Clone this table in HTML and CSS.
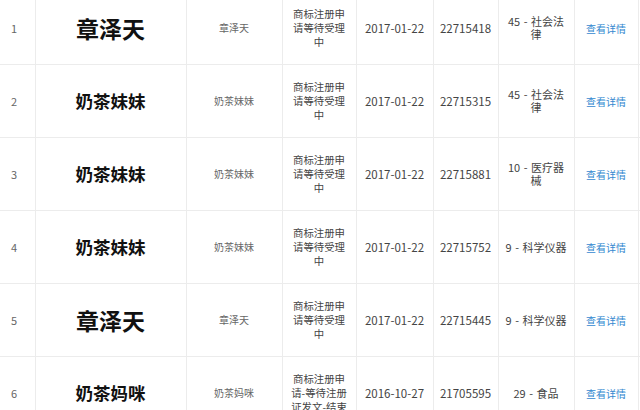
FILE: index.html
```html
<!DOCTYPE html>
<html lang="zh-CN">
<head>
<meta charset="utf-8">
<link rel="stylesheet" href="styles.css">
</head>
<body>
<table class="grid">
  <colgroup>
    <col class="c-no"><col class="c-mark"><col class="c-name"><col class="c-status"><col class="c-date"><col class="c-reg"><col class="c-cls"><col class="c-act"><col class="c-extra">
  </colgroup>
  <tbody>
    <tr>
      <td class="no">1</td>
      <td class="mark big">章泽天</td>
      <td class="name">章泽天</td>
      <td class="status">商标注册申<br>请等待受理<br>中</td>
      <td class="date">2017-01-22</td>
      <td class="reg">22715418</td>
      <td class="cls">45 - 社会法<br>律</td>
      <td class="act"><a class="link">查看详情</a></td>
      <td class="extra"></td>
    </tr>
    <tr>
      <td class="no">2</td>
      <td class="mark">奶茶妹妹</td>
      <td class="name">奶茶妹妹</td>
      <td class="status">商标注册申<br>请等待受理<br>中</td>
      <td class="date">2017-01-22</td>
      <td class="reg">22715315</td>
      <td class="cls">45 - 社会法<br>律</td>
      <td class="act"><a class="link">查看详情</a></td>
      <td class="extra"></td>
    </tr>
    <tr>
      <td class="no">3</td>
      <td class="mark">奶茶妹妹</td>
      <td class="name">奶茶妹妹</td>
      <td class="status">商标注册申<br>请等待受理<br>中</td>
      <td class="date">2017-01-22</td>
      <td class="reg">22715881</td>
      <td class="cls">10 - 医疗器<br>械</td>
      <td class="act"><a class="link">查看详情</a></td>
      <td class="extra"></td>
    </tr>
    <tr>
      <td class="no">4</td>
      <td class="mark">奶茶妹妹</td>
      <td class="name">奶茶妹妹</td>
      <td class="status">商标注册申<br>请等待受理<br>中</td>
      <td class="date">2017-01-22</td>
      <td class="reg">22715752</td>
      <td class="cls">9 - 科学仪器</td>
      <td class="act"><a class="link">查看详情</a></td>
      <td class="extra"></td>
    </tr>
    <tr>
      <td class="no">5</td>
      <td class="mark big">章泽天</td>
      <td class="name">章泽天</td>
      <td class="status">商标注册申<br>请等待受理<br>中</td>
      <td class="date">2017-01-22</td>
      <td class="reg">22715445</td>
      <td class="cls">9 - 科学仪器</td>
      <td class="act"><a class="link">查看详情</a></td>
      <td class="extra"></td>
    </tr>
    <tr>
      <td class="no">6</td>
      <td class="mark">奶茶妈咪</td>
      <td class="name">奶茶妈咪</td>
      <td class="status">商标注册申<br>请-等待注册<br>证发文-结束</td>
      <td class="date">2016-10-27</td>
      <td class="reg">21705595</td>
      <td class="cls">29 - 食品</td>
      <td class="act"><a class="link">查看详情</a></td>
      <td class="extra"></td>
    </tr>
  </tbody>
</table>
</body>
</html>
```

FILE: styles.css
```css
html, body {
  margin: 0;
  padding: 0;
  background: #ffffff;
  overflow: hidden;
}
body {
  width: 640px;
  height: 410px;
  font-family: "Noto Sans CJK SC", "Microsoft YaHei", sans-serif;
  color: #444;
}
.grid {
  border-collapse: collapse;
  table-layout: fixed;
  width: 659px;
  margin-top: -9px;
}
.c-no { width: 35px; }
.c-mark { width: 151px; }
.c-name { width: 96px; }
.c-status { width: 74px; }
.c-date { width: 77px; }
.c-reg { width: 65px; }
.c-cls { width: 76px; }
.c-act { width: 64px; }
.c-extra { width: 21px; }
.grid td {
  height: 72px;
  padding: 0;
  border: 1px solid #ececec;
  text-align: center;
  vertical-align: middle;
  font-size: 11px;
  line-height: 14px;
}
.grid tr td:first-child { border-left: none; }
.grid td.no {
  text-align: left;
  padding-left: 11px;
  color: #666;
  font-size: 11px;
}
.grid td.mark {
  font-size: 17.5px;
  font-weight: 700;
  color: #111;
  line-height: 22px;
}
.grid td.mark.big {
  font-size: 23px;
  line-height: 28px;
}
.grid td.name {
  font-size: 10px;
  color: #666;
}
.grid td.status {
  font-size: 10.4px;
  color: #444;
}
.grid td.date,
.grid td.reg {
  font-size: 11.5px;
  color: #444;
}
.grid td.cls {
  font-size: 11px;
  line-height: 13px;
  color: #444;
  word-spacing: 1px;
}
.link {
  color: #3388d0;
  font-size: 10px;
  cursor: pointer;
}
```
